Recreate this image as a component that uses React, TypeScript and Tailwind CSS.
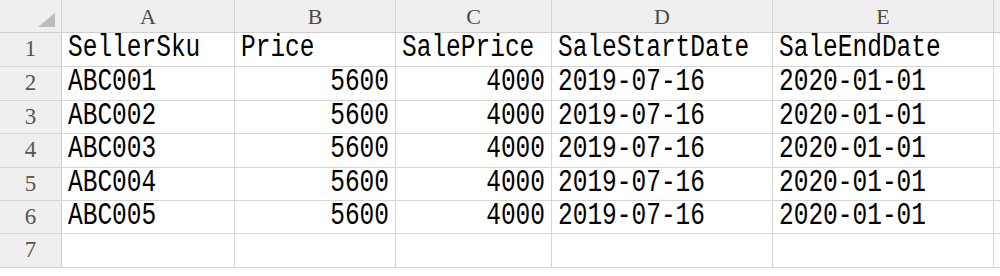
import React from "react";

const cols = ["A", "B", "C", "D", "E"];
const widths = ["w-[173px]", "w-[161px]", "w-[156px]", "w-[221px]", "w-[221px]"];
const rowHeights = ["h-[34px]", "h-[34px]", "h-[33px]", "h-[34px]", "h-[33px]", "h-[33px]", "h-[34px]"];

type Cell = { v: string; r?: boolean };
const data: Cell[][] = [
  [{ v: "SellerSku" }, { v: "Price" }, { v: "SalePrice" }, { v: "SaleStartDate" }, { v: "SaleEndDate" }],
  ...["ABC001", "ABC002", "ABC003", "ABC004", "ABC005"].map((s) => [
    { v: s },
    { v: "5600", r: true },
    { v: "4000", r: true },
    { v: "2019-07-16" },
    { v: "2020-01-01" },
  ]),
  [{ v: "" }, { v: "" }, { v: "" }, { v: "" }, { v: "" }],
];

const mono = "font-['Liberation_Mono','DejaVu_Sans_Mono',monospace]";

export default function App() {
  return (
    <div className="w-[1000px] h-[276px] bg-white overflow-hidden">
      <div className="flex h-[33px] bg-[#efefef] border-b border-[#cfcfcf]">
        <div className="w-[62px] shrink-0 border-r border-[#d4d4d4] relative">
          <div className="absolute left-[38px] top-[13px] w-0 h-0 border-l-[17px] border-l-transparent border-b-[14px] border-b-[#bcbcbc]" />
        </div>
        {cols.map((c, i) => (
          <div
            key={c}
            className={`${widths[i]} shrink-0 border-r border-[#d4d4d4] flex items-center justify-center text-[22px] text-[#4a4a4a] font-['Liberation_Serif',serif] pt-[1px]`}
          >
            {c}
          </div>
        ))}
        <div className="flex-1" />
      </div>
      {data.map((row, ri) => (
        <div key={ri} className={`flex ${rowHeights[ri]} border-b border-[#d6d6d6]`}>
          <div className="w-[62px] shrink-0 bg-[#efefef] border-r border-[#cfcfcf] flex items-center justify-center text-[23px] text-[#555] font-['Liberation_Serif',serif]">
            {ri + 1}
          </div>
          {row.map((cell, ci) => (
            <div
              key={ci}
              className={`${widths[ci]} shrink-0 border-r border-[#d6d6d6] flex items-center px-[6px] text-[24.5px] text-black ${mono} ${
                cell.r ? "justify-end" : "justify-start"
              } whitespace-nowrap`}
            >
              <span className="inline-block scale-y-[1.25]">{cell.v}</span>
            </div>
          ))}
          <div className="flex-1" />
        </div>
      ))}
    </div>
  );
}
